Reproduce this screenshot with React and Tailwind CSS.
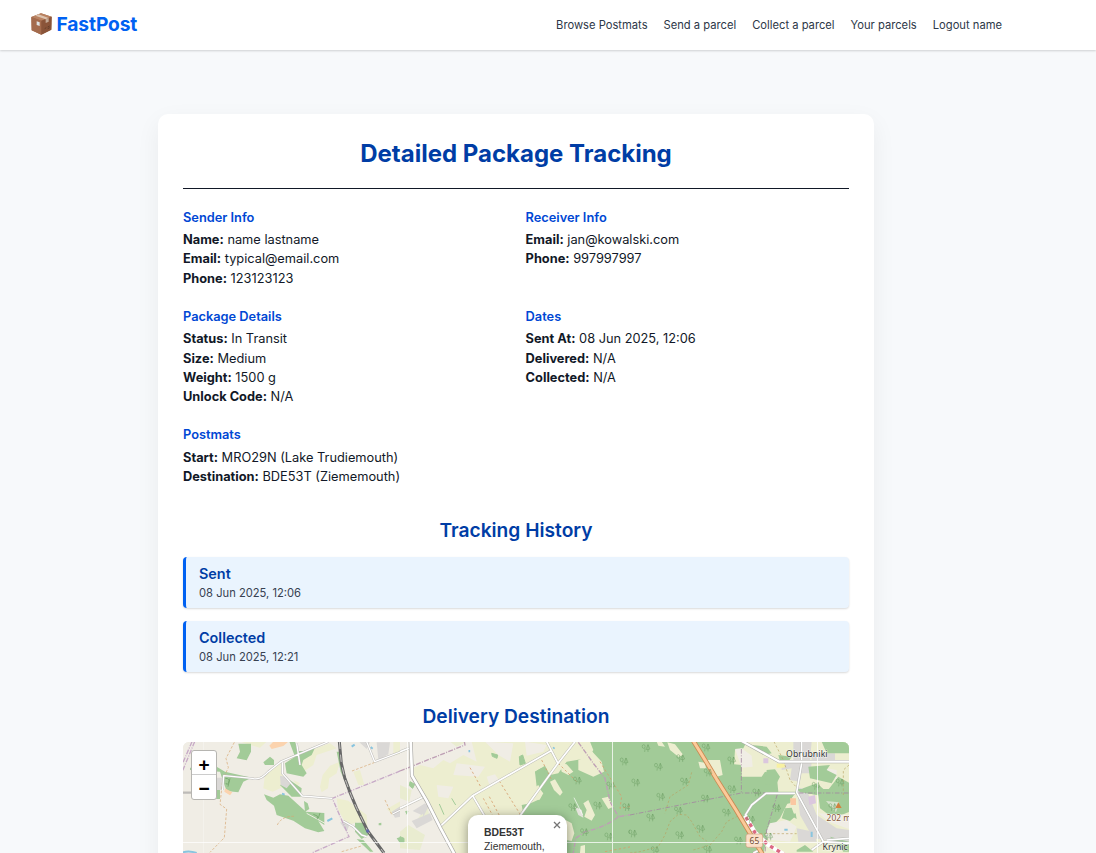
const navLinks = ['Browse Postmats', 'Send a parcel', 'Collect a parcel', 'Your parcels', 'Logout name'];

const sections = [
  { title: 'Sender Info', rows: [['Name:', 'name lastname'], ['Email:', 'typical@email.com'], ['Phone:', '123123123']] },
  { title: 'Receiver Info', rows: [['Email:', 'jan@kowalski.com'], ['Phone:', '997997997']] },
  { title: 'Package Details', rows: [['Status:', 'In Transit'], ['Size:', 'Medium'], ['Weight:', '1500 g'], ['Unlock Code:', 'N/A']] },
  { title: 'Dates', rows: [['Sent At:', '08 Jun 2025, 12:06'], ['Delivered:', 'N/A'], ['Collected:', 'N/A']] },
  { title: 'Postmats', rows: [['Start:', 'MRO29N (Lake Trudiemouth)'], ['Destination:', 'BDE53T (Ziememouth)']] },
];

const history = [
  { status: 'Sent', date: '08 Jun 2025, 12:06' },
  { status: 'Collected', date: '08 Jun 2025, 12:21' },
];

function BoxIcon() {
  return (
    <svg className="h-[22px] w-[21px]" viewBox="0 0 63 66">
      <path d="M1 12 30 1 62 11 61 50 31 65 2 52Z" fill="#a1694a" />
      <path d="M1 12 30 1 62 11 31 23Z" fill="#b98261" />
      <path d="M1 12 31 23V65L2 52Z" fill="#a46b4d" />
      <path d="M62 11 31 23V65L61 50Z" fill="#8a5439" />
      <path d="M13 8 22 4 53 15 44 19Z" fill="#dcc3af" />
      <path d="M44 19 53 15V26L44 30Z" fill="#c4a996" />
      <path d="M17 25 26 28V39L17 36Z" fill="#dfe2e2" />
      <path d="M41 47 46 44M50 42 56 39M50 47 56 44" stroke="#5d3827" strokeWidth="2.5" />
    </svg>
  );
}

const treesB = [[672, 80], [532, 137], [632, 152], [708, 143], [518, 217], [593, 212], [680, 217], [553, 292], [626, 305], [698, 296]];
const treesC = [[48, 40], [228, 38], [85, 96], [152, 70], [305, 77], [17, 143], [163, 140], [234, 113], [92, 186], [226, 191], [306, 163], [380, 173], [289, 233], [145, 227], [62, 248], [8, 296], [149, 301], [212, 282], [325, 317], [233, 344], [75, 346], [362, 254], [440, 220], [558, 153], [630, 143], [608, 217], [416, 305]];

function Tree({ x, y }) {
  return (
    <g transform={`translate(${x - 12} ${y - 12})`} fill="none" stroke="#6a9d62" strokeWidth="1.9" opacity=".75">
      <path d="M8 23Q9 17 9 12M5 1a4 5 0 1 0 .1 11a4 5 0 1 0 0-11M18 23V1L12 15q6 3 12-1L18 1" />
    </g>
  );
}

function WestArea() {
  return (
    <g transform="translate(170 735) scale(.33333)">
      <g fill="#edeed0">
        <path d="M285 118 338 80 340 155 308 170 280 160ZM338 75 480 25 500 40 440 60 430 90 400 110 380 75ZM458 120 480 92 510 80 500 115 478 130 474 160 455 172 450 155ZM500 190 535 197 590 240 592 275 565 262 530 270 505 225ZM550 110 570 105 583 150 565 150ZM370 135 390 145 380 155ZM212 20H290L270 38 240 30Z" />
        <path d="M670 20H715V50L670 62ZM650 222 715 185V215L670 240Z" />
      </g>
      <g fill="#a2cb98">
        <path d="M205 26H243V50L230 76 200 70 210 50ZM280 82 300 65 312 75 312 90 285 90ZM358 20H375L385 48H400L435 38 425 60 400 75 395 90 410 115 400 125 350 115 345 85 375 65ZM60 98 140 95 165 110 245 128 220 140 205 172 170 168 158 135 150 110 60 105ZM105 165H150V192H125ZM345 125 395 160 392 185 365 185 330 150 350 145Z" />
        <path d="M282 178 310 188 330 178 355 182 408 230 463 234 463 270 445 258 463 288 445 292 405 280 370 257 320 240 312 212 290 195ZM402 198 413 205 418 222 405 230ZM555 263H580L595 300 575 312 555 290ZM560 312 580 315 610 350H600ZM692 142l12-4 4 12-12 5ZM680 310l18-6 10 10-20 8ZM626 265l8-2v8h-8ZM500 50 508 50 520 110 540 160 530 150 512 110Z" />
      </g>
      <path d="M410 235 465 265" stroke="#f0ede5" strokeWidth="3" />
      <path d="M330 122 345 125 362 145 350 160 332 150ZM568 22 600 20 590 42ZM620 22H660L655 58 625 75ZM665 230 700 208 720 205V240L675 248ZM510 262 540 265 530 292ZM135 128H160V165H140Z" fill="#dad8d6" />
      <path d="M310 20H355L340 33 305 42 298 32ZM165 160 187 172 180 181 163 170Z" fill="#fbd3ae" />
      <path d="M545 35l9-6M472 258l15-8M336 176l8 3M602 36l6 5M38 352q20-6 42 2" stroke="#88c4df" strokeWidth="6" fill="none" />
      <g fill="none" stroke="#c7aac7" strokeWidth="4" strokeDasharray="15 4 3 4">
        <path d="M74 20 38 107M66 20 38 85M715 98 487 190 515 255 537 305 425 354" />
      </g>
      <g fill="none" stroke="#d7a66f" strokeWidth="2" strokeDasharray="8 5">
        <path d="M193 22 168 70 175 98 158 135 150 208 170 222 163 308 120 352M322 270Q335 242 377 244M645 195 665 238M546 108 620 80M515 350 578 332" />
      </g>
      <g fill="none" strokeLinejoin="round">
        <path d="M158 165 161 122 247 130Q270 138 295 110L333 80 475 20M337 82V115L397 183 487 190M520 258 550 275 575 300 590 305M380 25 390 90M590 20 614 80 715 42M668 237 715 213M38 173H65" stroke="#bdbbb8" strokeWidth="7" />
        <path d="M158 165 161 122 247 130Q270 138 295 110L333 80 475 20M337 82V115L397 183 487 190M520 258 550 275 575 300 590 305M380 25 390 90M590 20 614 80 715 42M668 237 715 213" stroke="#fff" strokeWidth="4" />
        <path d="M508 20 514 85 524 128Q540 175 560 220L593 288 642 354" stroke="#686868" strokeWidth="9" />
        <path d="M508 20 514 85 524 128Q540 175 560 220L593 288 642 354" stroke="#c9c7c4" strokeWidth="3" strokeDasharray="22 17" />
        <path d="M166 130q15 0 10 12t-8 2M180 130l-6 25M430 238l12 5v10M450 234l-5 15" stroke="#6a9d62" strokeWidth="2" />
      </g>
      <circle cx="593" cy="288" r="5" fill="#6168a8" />
    </g>
  );
}

function CentreArea() {
  return (
    <g transform="translate(400 735) scale(.33333)">
      <path d="M40 20H570V354H165L35 120Z" fill="#edeed0" />
      <path d="M28 105 60 90 100 100 130 75 150 85 190 60 230 80 215 20H0V108ZM0 108H28V120L75 195 110 270 155 354H0ZM255 20 340 25 330 80 295 60ZM375 20 440 30 430 50 380 62ZM170 85 255 95 235 125 160 120ZM110 150 160 155 145 190 115 185ZM260 125 285 118 300 140 270 155Z" fill="#f0ede5" />
      <path d="M150 20H200L170 35ZM0 150 35 165 28 200 0 190ZM50 255 82 215 90 250 65 265ZM25 270 75 300 60 345 0 340V290Z" fill="#e9ecd0" />
      <path d="M535 20H720V354H320L365 240 380 210 420 192 430 175 410 155 405 110 435 92 450 120 475 115 500 80 560 70 580 55 570 40Z" fill="#a2cb98" />
      <path d="M535 20H570L580 45 570 62 545 60ZM535 75 560 65 575 48 605 80 612 110 580 125 535 105ZM480 85 500 88 520 110 505 120 485 110ZM450 140 465 133 488 172 480 182 462 165ZM450 80 430 100 415 100ZM380 175 415 150 428 175 418 195 400 190ZM550 205 565 195 585 240 575 257 553 245 560 225ZM605 190 625 185 640 215 625 222ZM497 255 515 265 523 295 515 318 498 315ZM542 333 555 330V354H540Z" fill="#edeed0" />
      <path d="M405 110 435 92 430 150 420 155ZM365 210l15-3 10 20-20 10Z" fill="#a2cb98" />
      <path d="M525 215 545 225 550 248 535 240Z" fill="#e5e3dc" />
      <path d="M38 228 75 205 85 215 65 240ZM35 258 90 235 98 255 50 280ZM65 210 85 215 70 245Z" fill="#dad8d6" />
      <path d="M275 55l18 5-2 10-14-6ZM358 65l10-5 8 25-16 5ZM30 140l14 8-6 12-10-8ZM118 207l14 32M155 190l12 20M0 305l12 5v12H0ZM16 230l8-2-5 10" fill="#a2cb98" stroke="#a2cb98" strokeWidth="3" />
      <path d="M208 45v7M459 37l5 4" stroke="#88c4df" strokeWidth="5" />
      <g fill="none" stroke="#be9fb5" strokeWidth="4" strokeDasharray="15 4 3 4">
        <path d="M0 108 195 30 193 20M535 22 580 85 615 130 630 200 655 245 720 235M655 245Q620 275 555 290L527 310 520 354" />
      </g>
      <g fill="none" stroke="#d59c69" strokeWidth="3" strokeDasharray="7 7">
        <path d="M210 98 242 155M298 138 365 245M250 190 280 245M268 185 300 245M425 75 455 135M475 85 530 140M600 80 665 185 660 220 718 210M615 350 720 330" opacity=".8" />
      </g>
      <g fill="none" strokeLinejoin="round">
        <path d="M0 220 68 187M120 275 218 182 452 48M218 182 255 245M440 20 474 85 525 20M474 85 358 245M0 50 30 38" stroke="#bdbdb6" strokeWidth="8" />
        <path d="M0 220 68 187M120 275 218 182 452 48M218 182 255 245M440 20 474 85 525 20M474 85 358 245M0 50 30 38" stroke="#fff" strokeWidth="5" />
        <path d="M32 20 36 122 80 197 122 280 165 360" stroke="#aaa9a5" strokeWidth="12" />
        <path d="M32 20 36 122 80 197 122 280 165 360" stroke="#fff" strokeWidth="8" />
        <path d="M522 188 548 240" stroke="#fff" strokeWidth="2" />
      </g>
      {treesB.map(([x, y]) => <Tree key={`${x}-${y}`} x={x} y={y} />)}
    </g>
  );
}

function EastArea() {
  return (
    <g transform="translate(630 735) scale(.33333)">
      <path d="M0 20H660V354H0Z" fill="#a2cb98" />
      <path d="M350 20H660V145L625 125 590 170 560 145 505 165 475 200 450 250 420 280 400 354H660V230L610 250 570 220 565 180 500 170 445 170 440 120 405 110 395 125H335V90L312 88 315 45 340 40Z" fill="#edeed0" />
      <path d="M80 20H95L105 35 85 32ZM112 22 135 28 160 60 145 65 120 45ZM205 80 225 83 228 100 210 100ZM232 75H270L278 120 260 125 240 110Z" fill="#edeed0" />
      <path d="M315 42 335 40 365 62 368 95 335 98ZM495 20H530V40H495ZM420 265 470 255 500 275 480 320 420 315 405 300ZM590 100 620 105V132H590ZM490 45 515 50 510 80 485 75ZM565 235 657 240V282L600 262Z" fill="#f0ede5" />
      <path d="M455 80 545 85 540 115 515 115 510 140 480 135 485 100 455 105ZM490 20 545 20 540 75 490 80ZM500 155 530 165 560 240 620 280 657 285V325L550 310 530 275 510 240ZM545 55H615V75H545ZM500 280 550 290 560 320H505Z" fill="#dad8d6" />
      <path d="M365 30 410 35 425 55 400 60ZM445 60 485 65 475 80H450ZM535 95 600 90 590 105 620 120 605 145 540 130ZM575 20H657V55H590ZM500 162H657V225L625 230 615 190 580 200 565 180 510 172ZM465 220 485 218 495 245 480 258 455 250ZM480 240 497 235 500 252ZM445 172 490 178 480 205 450 210 435 190ZM500 345 525 330 550 350H500ZM410 105 435 103 450 125 440 145 405 150ZM600 305 657 320V350H640Z" fill="#a2cb98" />
      <path d="M588 198l40 4-10 30Z" fill="#f0ede5" opacity=".7" />
      <path d="M400 70h15v15h-15ZM535 185 555 180 558 205 538 210Z" fill="#dbc7de" />
      <path d="M480 190H498V210H482Z" fill="#fac7a1" />
      <path d="M440 86h24v12h-24Z" fill="#f8f1a1" />
      <path d="M545 290v16M463 284h10" stroke="#89c5df" strokeWidth="6" />
      <g fill="none" stroke="#a284a0" strokeWidth="3" strokeDasharray="14 5 3 5" opacity=".8">
        <path d="M0 240 165 207 334 174H657M334 42V174M442 178 410 285 405 354" />
      </g>
      <g fill="none" stroke="#b8a060" strokeWidth="2.5" strokeDasharray="7 6" opacity=".75">
        <path d="M432 20 460 75 480 135 502 160M185 112 175 150 120 185 105 235M0 354 30 350 85 335 105 300 120 260 145 238 170 240 185 260 210 305 230 318M190 345 240 330 275 290 290 260 320 245M390 296H500M657 90 640 105V180" />
      </g>
      <g fill="none" strokeLinejoin="round">
        <path d="M345 242 365 210 408 175H495M515 85 500 172 580 320 657 325M580 320 545 345M657 310 590 315M515 20V85M370 354 388 345" stroke="#b8b8b4" strokeWidth="8" />
        <path d="M345 242 365 210 408 175H495M515 85 500 172 580 320 657 325M580 320 545 345M657 310 590 315M515 20V85M370 354 388 345" stroke="#fff" strokeWidth="5" />
        <path d="M335 18 448 80H660" stroke="#aeada9" strokeWidth="10" />
        <path d="M335 18 448 80H660" stroke="#fff" strokeWidth="7" />
        <path d="M345 242 375 293 415 330 462 358" stroke="#fff" strokeWidth="13" />
        <path d="M345 242 375 293 415 330 462 358" stroke="#dc6883" strokeWidth="10" strokeDasharray="11 12" strokeDashoffset="-28" />
        <path d="M190 18 Q230 82 260 133L318 225 400 362" stroke="#c98a52" strokeWidth="14" />
        <path d="M190 18 Q230 82 260 133L318 225 400 362" stroke="#fbca9a" strokeWidth="9" />
      </g>
      {treesC.map(([x, y]) => <Tree key={`${x}-${y}`} x={x} y={y} />)}
      <path d="M616 219 625 202 635 219Z" fill="#d1813f" />
      <rect x="348" y="297" width="50" height="40" rx="6" fill="#fbdfc7" stroke="#cf9f7b" strokeWidth="2" />
    </g>
  );
}

function DestinationMap() {
  return (
    <div className="relative h-[320px] w-[666.4px] overflow-hidden rounded-[6px] bg-[#efebe4]">
      <svg className="block h-[111px] w-[667px]" viewBox="183 742 667 111">
        <rect x="183" y="742" width="667" height="111" fill="#f0ede5" />
        <WestArea />
        <CentreArea />
        <EastArea />
        <path d="M183 842.5H850M407.5 742V853M612.5 742V853M817.5 742V853" stroke="#fff" strokeWidth="1" opacity=".75" />
        <path d="M203.5 742V853" stroke="#fff" opacity=".3" />
        <g fontFamily="Noto Sans, sans-serif" stroke="#fff" strokeOpacity=".65" strokeWidth="1" paintOrder="stroke" fill="#343434">
          <text x="786" y="757" fontSize="8.7" textLength="41.6">Obrubniki</text>
          <text x="822.6" y="849.8" fontSize="8.7">Krynic</text>
          <text x="826.6" y="820.5" fontSize="8.4" fill="#855636">202 m</text>
          <text x="749.6" y="843.6" fontSize="8.4" fill="#704b32" stroke="none">65</text>
        </g>
      </svg>
      <div className="absolute top-[8px] left-[8px] flex w-[26px] flex-col rounded-[3px] border border-[#b6b5b1] bg-white font-['Liberation_Sans',sans-serif] text-[19px] font-bold text-black">
        <button className="flex h-[24px] items-center justify-center border-b border-[#ccc] pt-[4px] leading-none">+</button>
        <button className="flex h-[24px] items-center justify-center pt-[3px] leading-none">−</button>
      </div>
      <div className="absolute top-[73px] left-[285px] h-[80px] w-[98.5px] rounded-[10px] bg-white pt-[11px] pl-[16px] font-['Liberation_Sans',sans-serif] text-[10.4px] leading-[14px] text-[#333] shadow-[0_2px_11px_rgba(0,0,0,0.4)]">
        <b className="block">BDE53T</b>
        <span>Ziememouth,</span>
        <svg className="absolute top-[6px] right-[6px] size-[8px]" viewBox="0 0 8 8">
          <path d="M1 1 7 7M7 1 1 7" stroke="#757575" strokeWidth="1.3" />
        </svg>
      </div>
    </div>
  );
}

export default function App() {
  return (
    <div className="flex h-[853px] flex-col overflow-hidden bg-[#f7f9fb] font-['Inter',sans-serif] text-[12.8px] leading-[19.2px] text-[#111827]">
      <header className="z-10 flex h-[50px] shrink-0 items-center justify-between bg-white pr-[94px] pl-[31px] shadow-[0_1px_2px_rgba(0,0,0,0.16)]">
        <div className="flex items-center gap-[4.5px] pb-[2px] text-[19.2px] font-bold text-[#0061f2]">
          <BoxIcon />
          <span className="pt-[2px] tracking-[-0.13px]">FastPost</span>
        </div>
        <nav className="flex gap-[16px] pt-[2px] text-[11.2px] text-[#2d3748]">
          {navLinks.map((label) => <a key={label}>{label}</a>)}
        </nav>
      </header>
      <main className="mt-[64px] ml-[158px] h-[1000px] w-[716px] shrink-0 rounded-[10px] bg-white px-[25px] shadow-[0_8px_24px_rgba(0,0,0,0.06)]">
        <h1 className="flex h-[75px] w-[666px] items-center justify-center border-b border-[#111827] pt-[5px] text-[24px] font-bold text-[#003da5]">
          Detailed Package Tracking
        </h1>
        <div className="mt-[18.85px] grid w-[666px] grid-cols-2 gap-[19.2px]">
          {sections.map(({ title, rows }) => (
            <section key={title}>
              <h2 className="mb-[3.2px] font-semibold text-[#0047d4]">{title}</h2>
              {rows.map(([label, value]) => (
                <p key={label}><strong className="font-bold">{label}</strong> {value}</p>
              ))}
            </section>
          ))}
        </div>
        <h2 className="mt-[30.75px] flex h-[28px] items-center justify-center text-[19.2px] font-semibold text-[#003da5]">Tracking History</h2>
        <div className="mt-[12px] flex w-[666.4px] flex-col gap-[13px]">
          {history.map(({ status, date }) => (
            <div key={status} className="flex h-[51px] flex-col justify-center rounded-[4px] border-l-[3px] border-[#0061f2] bg-[#eaf4fe] pt-[2px] pl-[13px] shadow-[0_1px_2px_rgba(0,0,0,0.15)]">
              <p className="text-[14.4px] font-semibold text-[#003da5]">{status}</p>
              <p className="pt-[0.6px] text-[11.2px] text-[#374151]">{date}</p>
            </div>
          ))}
        </div>
        <h2 className="mt-[31px] mb-[11px] flex h-[28px] items-center justify-center text-[19.2px] font-semibold text-[#003da5]">Delivery Destination</h2>
        <DestinationMap />
      </main>
    </div>
  );
}
